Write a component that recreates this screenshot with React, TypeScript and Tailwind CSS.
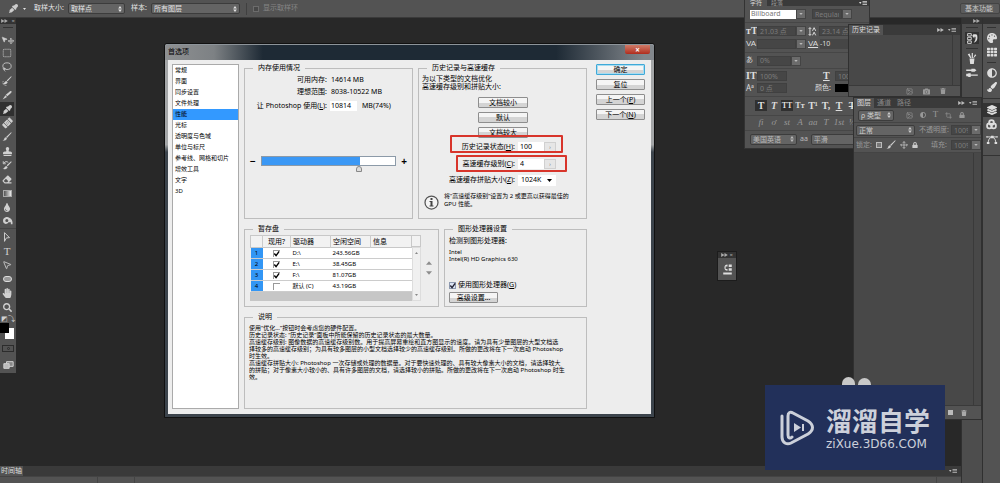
import type { ReactNode } from 'react';
import {
  FaAdjust,
  FaBandAid,
  FaCamera,
  FaEraser,
  FaEyeDropper,
  FaHandPaper,
  FaLayerGroup,
  FaLock,
  FaPaintBrush,
  FaPalette,
  FaSearch,
  FaStamp,
  FaTh,
  FaTint,
  FaTrash,
} from 'react-icons/fa';
import { Crop, Image, Lasso, Move, MousePointer2, SquareDashed } from 'lucide-react';

const categories = [
  '常规',
  '界面',
  '同步设置',
  '文件处理',
  '性能',
  '光标',
  '透明度与色域',
  '单位与标尺',
  '参考线、网格和切片',
  '增效工具',
  '文字',
  '3D',
];

const disks = [
  { id: 1, name: 'D:\\', free: '243.56GB', active: true },
  { id: 2, name: 'E:\\', free: '38.45GB', active: true },
  { id: 3, name: 'F:\\', free: '81.07GB', active: true },
  { id: 4, name: '默认 (C)', free: '43.19GB', active: false },
];

const description = [
  '使用“优化...”按钮时会考虑您的硬件配置。',
  '历史记录状态: “历史记录”面板中所能保留的历史记录状态的最大数量。',
  '高速缓存级别: 图像数据的高速缓存级别数。用于提高屏幕重绘和直方图显示的速度。请为具有少量图层的大型文档选',
  '择较多的高速缓存级别；为具有较多图层的小型文档选择较少的高速缓存级别。所做的更改将在下一次启动 Photoshop',
  '时生效。',
  '高速缓存拼贴大小: Photoshop 一次存储或处理的数据量。对于要快速处理的、具有较大像素大小的文档，请选择较大',
  '的拼贴；对于像素大小较小的、具有许多图层的文档，请选择较小的拼贴。所做的更改将在下一次启动 Photoshop 时生',
  '效。',
];

const Triangle = ({ className }: { className: string }) => (
  <svg viewBox="0 0 10 6" className={className} fill="currentColor" aria-hidden="true">
    <path d="M0 0h10L5 6z" />
  </svg>
);

const UpDown = () => (
  <svg viewBox="0 0 6 10" className="h-[6px] w-1 shrink-0" fill="currentColor" aria-hidden="true">
    <path d="M3 0l3 4H0zM3 10L0 6h6z" />
  </svg>
);

const DoubleArrow = () => (
  <svg viewBox="0 0 10 6" className="h-1 w-[7px]" fill="currentColor" aria-hidden="true">
    <path d="M0 0l5 3-5 3zM5 0l5 3-5 3z" />
  </svg>
);

const MenuIcon = () => (
  <svg viewBox="0 0 16 8" className="h-1 w-2" fill="currentColor" aria-hidden="true">
    <path d="M0 2h5L2.500 6zM7 0h9v1.500H7zM7 3h9v1.500H7zM7 6h9v1.500H7z" />
  </svg>
);

const CheckMark = () => (
  <svg
    viewBox="0 0 8 8"
    className="pointer-events-none invisible col-start-1 row-start-1 h-[7px] w-[7px] peer-checked:visible"
    fill="none"
    stroke="currentColor"
    strokeWidth="1.600"
    aria-hidden="true"
  >
    <path d="M1.500 4l2 2.500L7 1.500" />
  </svg>
);

const BrushIcon = () => (
  <svg viewBox="0 0 16 16" className="h-[10px] w-[10px]" fill="currentColor" aria-hidden="true">
    <path d="M15.500 1L8 9.500 6.500 8 14.500.500zM6 8.500l2 2C7 13 4 14.500.500 14c2-.8 2.500-1.500 3-3S4.800 8.800 6 8.500z" />
  </svg>
);

const SliceIcon = () => (
  <svg viewBox="0 0 16 16" className="h-[10px] w-[10px]" fill="currentColor" aria-hidden="true">
    <path d="M15 2c-1-1-2.500 0-3.500 1L6 7.500 8.500 10 14 5c1-1 2-2 1-3zM5.500 8.500L8 11l-7 4z" />
  </svg>
);

const MarqueeBrushIcon = () => (
  <svg viewBox="0 0 16 16" className="h-[10px] w-[10px]" fill="currentColor" aria-hidden="true">
    <path d="M15.500 1L9 8.500 7.500 7 14.500.500zM7 8l2 2c-1 3-4 4-8 3 2.500-.8 3.200-4.500 6-5z" />
    <path d="M2 8C0 12 3 15.500 8 15.500" fill="none" stroke="currentColor" strokeDasharray="2 1" />
  </svg>
);

const HistoryBrushIcon = () => (
  <svg viewBox="0 0 16 16" className="h-[10px] w-[10px]" fill="currentColor" aria-hidden="true">
    <path d="M15.500 3L9 10 7.500 8.500 14.500 2zM7 9.500l2 2c-1 3-4 3.500-8 3 2.500-.8 3.200-4.500 6-5z" />
    <path d="M3 5c2-3 5-3 7-1M2 2v4h4" fill="none" stroke="currentColor" strokeWidth="1.500" />
  </svg>
);

const DodgeIcon = () => (
  <svg viewBox="0 0 16 12" className="h-2 w-[11px]" fill="currentColor" aria-hidden="true">
    <path
      fillRule="evenodd"
      d="M6 0C10 0 15 2 15.500 8v3H13V8H9.500C8 10.500 5 11 3 9.500S-.5 2 6 0zm1 3a2.300 2.300 0 100 4.600A2.300 2.300 0 007 3z"
    />
  </svg>
);

const PenIcon = () => (
  <svg viewBox="0 0 12 16" className="h-[10px] w-2" fill="none" stroke="currentColor" aria-hidden="true">
    <path d="M2 15L2 1l8 8-5 .500L2 15" strokeWidth="1.500" />
  </svg>
);

const BrushCupIcon = () => (
  <svg viewBox="0 0 16 18" className="h-[11px] w-[10px]" fill="currentColor" aria-hidden="true">
    <path d="M4 9h8l-1 9H5zM1 2l3-1 3 7H5zM7.500 0h2v8h-2zM13 2l2 1.500L11 8h-1z" />
  </svg>
);

const BrushSetIcon = () => (
  <svg viewBox="0 0 18 14" className="h-[9px] w-3" fill="currentColor" aria-hidden="true">
    <path d="M0 2.500h8V1h5l3 2.500L13 6H8V4.500H0zM0 9h2l2-1h3v2h11v2H7v2H4l-2-1H0z" />
  </svg>
);

const HistoryIcon = () => (
  <svg viewBox="0 0 18 18" className="h-[11px] w-[11px]" aria-hidden="true">
    <path d="M1 1h6v4H1zM1 7h6v4H1zM1 13h6v4H1z" fill="none" stroke="currentColor" strokeWidth="1.500" />
    <path d="M10 2h4c3 0 3 2 3 6s-2 6-6 8c2-3 3-5 3-8V6h-2v3L8.500 4.500 12 1" fill="currentColor" />
  </svg>
);

const ChannelIcon = () => (
  <svg viewBox="0 0 16 16" className="h-[11px] w-[11px]" fill="none" stroke="currentColor" strokeWidth="2.500" aria-hidden="true">
    <circle cx="8" cy="5" r="3.500" />
    <circle cx="5" cy="10" r="3.500" />
    <circle cx="11" cy="10" r="3.500" />
  </svg>
);

const PathIcon = () => (
  <svg viewBox="0 0 18 14" className="h-[9px] w-3" fill="none" stroke="currentColor" aria-hidden="true">
    <path d="M1 3h16M3 13C3 8 5 4 9 3c4 1 6 5 6 10" strokeWidth="1.500" />
    <path d="M7.500 1h4v4h-4zM1 11h4v3H1zM13 11h4v3h-4zM0 2h2v2H0zM16 2h2v2h-2z" fill="currentColor" stroke="none" />
  </svg>
);

const tools: { name: string; icon: ReactNode }[] = [
  { name: '移动', icon: <><MousePointer2 className="h-[7px] w-[7px]" fill="currentColor" /><Move className="mt-1 h-[6px] w-[6px]" strokeWidth={3} /></> },
  { name: '选框', icon: <SquareDashed className="h-[10px] w-[10px]" /> },
  { name: '套索', icon: <Lasso className="h-[10px] w-[10px]" /> },
  { name: '快速选择', icon: <MarqueeBrushIcon /> },
  { name: '裁剪', icon: <SliceIcon /> },
  { name: '吸管', icon: <FaEyeDropper className="h-[9px] w-[9px]" /> },
  { name: '修复画笔', icon: <FaBandAid className="h-[10px] w-[11px] -rotate-45" /> },
  { name: '画笔', icon: <BrushIcon /> },
  { name: '图章', icon: <FaStamp className="h-[9px] w-[9px]" /> },
  { name: '历史画笔', icon: <HistoryBrushIcon /> },
  { name: '橡皮擦', icon: <FaEraser className="h-[9px] w-[10px]" /> },
  { name: '渐变', icon: <span className="h-[7px] w-[9px] border border-[#aaa] bg-linear-to-r from-[#555] to-[#eee]" /> },
  { name: '模糊', icon: <FaTint className="h-[9px] w-2" /> },
  { name: '减淡', icon: <DodgeIcon /> },
];

const vectorTools: { name: string; icon: ReactNode }[] = [
  { name: '钢笔', icon: <PenIcon /> },
  { name: '文字', icon: <span className="font-['Liberation_Serif',serif] text-[11px]">T</span> },
  { name: '路径选择', icon: <MousePointer2 className="h-[10px] w-[10px]" /> },
  { name: '形状', icon: <span className="h-[6px] w-[9px] rounded-[3px] border border-[#ddd] bg-[#999]" /> },
  { name: '抓手', icon: <FaHandPaper className="h-[10px] w-[10px]" /> },
  { name: '缩放', icon: <FaSearch className="h-[9px] w-[9px]" /> },
];

const ToolButton = ({ name, active, children }: { name: string; active?: boolean; children: ReactNode }) => (
  <button
    aria-label={name}
    className={`flex h-[14px] w-[14px] items-center justify-center ${active ? 'bg-[#303030]' : ''}`}
  >
    {children}
  </button>
);

const Toolbar = () => (
  <aside className="flex w-4 shrink-0 flex-col self-start bg-[#535353] text-[#d0d0d0]">
    <div className="flex h-[6px] items-center justify-between bg-[#333] px-px text-[#aaa]">
      <DoubleArrow />
      <span className="text-[6px] leading-[6px]">×</span>
    </div>
    <div className="mx-[3px] mt-[3px] mb-1 h-px bg-[#333]" />
    {tools.map((tool) => (
      <ToolButton key={tool.name} name={tool.name} active={tool.name === '吸管'}>
        {tool.icon}
      </ToolButton>
    ))}
    <div className="mb-px h-px bg-[#444]" />
    {vectorTools.map((tool) => (
      <ToolButton key={tool.name} name={tool.name}>
        {tool.icon}
      </ToolButton>
    ))}
    <div className="flex h-[9px] items-center justify-between px-px text-[7px] leading-none">
      <span>◩</span>
      <span>⤵</span>
    </div>
    <div className="grid h-[18px] grid-cols-[5px_4px_5px] grid-rows-[5px_5px_6px]">
      <span className="z-10 col-span-2 col-start-1 row-span-2 row-start-1 bg-black" />
      <span className="col-span-2 col-start-2 row-span-2 row-start-2 bg-white" />
    </div>
    <button aria-label="快速蒙版" className="mx-[2px] mt-1 flex h-[7px] items-center justify-center border border-[#2c2c2c]">
      <span className="h-[3px] w-[3px] rounded-full border border-[#2c2c2c]" />
    </button>
    <button aria-label="屏幕模式" className="mt-2 mb-1 flex h-[9px] items-center justify-center">
      <svg viewBox="0 0 16 12" className="h-2 w-[11px]" fill="none" stroke="currentColor" strokeWidth="1.500" aria-hidden="true">
        <path d="M5 1h10v7H5z" fill="#888" />
        <path d="M1 4h8v7H1z" fill="#bbb" />
      </svg>
    </button>
  </aside>
);

const DarkSelect = ({ label, value, className }: { label: string; value: string; className: string }) => (
  <div className={`flex h-[11px] items-center rounded-[2px] border border-[#3c3c3c] bg-[#646464] px-[2px] ${className}`}>
    <select aria-label={label} className="min-w-0 flex-1 appearance-none leading-[9px] outline-none">
      <option>{value}</option>
    </select>
    <UpDown />
  </div>
);

const OptionsBar = () => (
  <header className="flex h-[18px] shrink-0 items-center border-b border-[#3a3a3a] bg-[#535353] pl-[9px] text-[7px] text-[#e4e4e4]">
    <FaEyeDropper className="h-[9px] w-[9px] text-[#ccc]" />
    <Triangle className="ml-[5px] h-[2px] w-[3px]" />
    <span className="ml-2 w-[34px]">取样大小:</span>
    <DarkSelect label="取样大小" value="取样点" className="w-[57px]" />
    <span className="ml-[6px] w-5">样本:</span>
    <DarkSelect label="样本" value="所有图层" className="w-[89px]" />
    <div className="mx-[6px] h-3 w-px bg-[#404040]" />
    <label className="flex items-center gap-1 text-[#858585]">
      <input type="checkbox" disabled className="h-[6px] w-[6px] appearance-none border border-[#6c6c6c] bg-[#484848]" />
      显示取样环
    </label>
    <button className="ml-auto h-[11px] rounded-[2px] border border-[#444] bg-[#5c5c5c] pr-[6px] pl-[4px] leading-[9px] text-[#ccc]">基本功能</button>
  </header>
);

const PanelTabs = ({ tabs }: { tabs: string[] }) => (
  <div className="flex h-[10px] shrink-0 items-center bg-[#3a3a3a] pr-1 text-[#bbb]">
    {tabs.map((tab, index) => (
      <button
        key={tab}
        className={`h-full px-[3px] leading-[10px] ${index === 0 ? 'bg-[#535353] text-[#ddd]' : 'text-[#888]'}`}
      >
        {tab}
      </button>
    ))}
    <span className="mr-1 ml-auto flex"><DoubleArrow /></span>
    <MenuIcon />
  </div>
);

const DropButton = ({ label }: { label: string }) => (
  <button aria-label={label} className="flex h-[10px] w-[10px] shrink-0 items-center justify-center border border-[#444] bg-[#6b6b6b] text-[#bbb]">
    <Triangle className="h-[2px] w-1" />
  </button>
);

const DarkField = ({ label, value, className }: { label: string; value: string; className: string }) => (
  <input
    aria-label={label}
    defaultValue={value}
    className={`h-[10px] min-w-0 border border-[#404040] bg-[#464646] px-[2px] leading-2 text-[#7c7c7c] outline-none ${className}`}
  />
);

const CharacterPanel = () => (
  <section className="absolute top-0 right-[130px] flex w-[126px] flex-col overflow-hidden border border-t-0 border-[#333] bg-[#535353] text-[7px] text-[#ddd]">
    <div className="flex h-[6px] items-center bg-[#3a3a3a] pr-[2px] text-[6px] leading-[6px]">
      <button className="h-[6px] bg-[#535353] px-[5px]">字符</button>
      <button className="h-[6px] px-1 text-[#999]">段落</button>
      <span className="ml-auto"><MenuIcon /></span>
    </div>
    <div className="flex h-[17px] items-center border-b border-[#464646] pl-[5px]">
      <input aria-label="字体" defaultValue="Billboard" className="h-[9px] w-[46px] bg-white px-px text-[#777] outline-none" />
      <DropButton label="选择字体" />
      <DarkField label="字形" value="Regular" className="ml-[6px] w-[30px]" />
      <DropButton label="选择字形" />
    </div>
    <div className="flex flex-col gap-[3px] border-b border-[#464646] py-[3px] pl-px">
      <div className="flex items-center">
        <span className="w-[11px] font-['Liberation_Serif',serif] text-[10px] leading-[10px] font-bold">тT</span>
        <DarkField label="字号" value="21.03 点" className="w-[39px]" />
        <DropButton label="选择字号" />
        <svg viewBox="0 0 14 14" className="mx-[2px] h-[9px] w-[9px]" fill="none" stroke="currentColor" strokeWidth="1.500" aria-hidden="true">
          <path d="M3 1v12M1 3l2-2 2 2M1 11l2 2 2-2M7 6l2.500-5L12 6M7 13l2.500-5 2.500 5" />
        </svg>
        <DarkField label="行距" value="23.14 点" className="w-[40px]" />
      </div>
      <div className="flex items-center">
        <span className="w-[11px] font-['Liberation_Sans',sans-serif] text-[8px] leading-[10px]">VA</span>
        <DarkField label="字偶间距" value="" className="w-[39px]" />
        <DropButton label="选择字偶间距" />
        <span className="ml-[2px] w-3 font-['Liberation_Sans',sans-serif] text-[8px] leading-[10px] underline">VA</span>
        <input aria-label="字距" defaultValue="-10" className="h-[10px] w-[40px] bg-[#464646] text-[#ddd] outline-none" />
      </div>
    </div>
    <div className="flex h-[16px] items-center border-b border-[#464646] pl-px">
      <span className="w-[11px]">あ</span>
      <DarkField label="比例间距" value="0%" className="w-[34px]" />
      <DropButton label="选择比例间距" />
    </div>
    <div className="flex flex-col gap-[2px] border-b border-[#464646] py-[2px] pl-px">
      <div className="flex items-center">
        <span className="w-[11px] font-['Liberation_Serif',serif] text-[10px] leading-[10px] font-bold">IT</span>
        <DarkField label="垂直缩放" value="100%" className="w-[30px]" />
        <span className="ml-9 w-3 font-['Liberation_Serif',serif] text-[10px] leading-[10px] font-bold underline">T</span>
        <DarkField label="水平缩放" value="100%" className="w-[30px]" />
      </div>
      <div className="flex items-center">
        <span className="w-[11px] text-[8px] leading-[10px]">Aª</span>
        <DarkField label="基线偏移" value="0 点" className="w-[30px]" />
        <span className="ml-7 w-5">颜色:</span>
        <button aria-label="文字颜色" className="h-2 w-[30px] bg-black" />
      </div>
    </div>
    <div className="flex h-[18px] items-center gap-px pl-[10px] font-['Liberation_Serif',serif] text-[10px] font-bold">
      <button className="h-[11px] w-3 bg-[#303030] leading-[11px]">T</button>
      <button className="h-[11px] w-3 leading-[11px] italic">T</button>
      <button className="h-[11px] w-3 bg-[#303030] text-[8px] leading-[11px]">TT</button>
      <button className="h-[11px] w-3 text-[8px] leading-[11px]">Tт</button>
      <button className="h-[11px] w-3 leading-[11px]">T¹</button>
      <button className="h-[11px] w-3 leading-[11px]">T,</button>
      <button className="h-[11px] w-3 leading-[11px] underline">T</button>
      <button className="h-[11px] w-3 leading-[11px] line-through">T</button>
    </div>
    <div className="flex h-[16px] items-center gap-px border-y border-[#464646] pl-[10px] font-['Liberation_Serif',serif] text-[9px] text-[#999]">
      {['fi', 'ơ', 'st', 'A', 'aa', 'T', '1st', '½'].map((feature) => (
        <button key={feature} className="h-[11px] w-3 leading-[11px] italic">{feature}</button>
      ))}
    </div>
    <div className="flex h-[17px] items-center gap-[3px] pl-[5px] text-[#bbb]">
      <DarkSelect label="语言" value="美国英语" className="w-[47px]" />
      <span>aa</span>
      <DarkSelect label="消除锯齿" value="平滑" className="w-[50px]" />
    </div>
  </section>
);

const HistoryPanel = () => (
  <section className="absolute top-6 right-[39px] flex h-[73px] w-[113px] flex-col border border-[#303030] bg-[#484848] text-[7px]">
    <PanelTabs tabs={['历史记录']} />
    <div className="mr-[7px] flex-1 border-r border-[#3a3a3a]" />
    <div className="flex h-[11px] items-center justify-end gap-[10px] border-t border-[#3a3a3a] bg-[#535353] pr-[14px] text-[#999]">
      <Image className="h-[7px] w-[7px]" />
      <FaCamera className="h-[7px] w-[7px]" />
      <FaTrash className="h-[6px] w-[6px]" />
    </div>
  </section>
);

const LayersPanel = () => (
  <section className="absolute top-[97px] right-[18px] flex h-[323px] w-[129px] flex-col border border-[#303030] bg-[#484848] text-[7px] text-[#ccc]">
    <PanelTabs tabs={['图层', '通道', '路径']} />
    <div className="flex h-[14px] items-center bg-[#535353] pl-1">
      <DarkSelect label="筛选类型" value="ρ 类型" className="w-9" />
      <div className="ml-3 flex flex-1 items-center justify-between pr-4 text-[#999]">
        <Image className="h-[7px] w-[7px]" />
        <FaAdjust className="h-[6px] w-[6px]" />
        <span className="font-['Liberation_Serif',serif] text-[9px]">T</span>
        <Crop className="h-[7px] w-[7px]" />
        <FaLock className="h-[6px] w-[6px]" />
      </div>
    </div>
    <div className="flex h-[15px] items-center border-t border-[#444] bg-[#535353] pl-[2px]">
      <DarkSelect label="混合模式" value="正常" className="w-[59px]" />
      <span className="ml-1 w-8 shrink-0 whitespace-nowrap text-[#999]">不透明度:</span>
      <DarkField label="不透明度" value="100%" className="w-5" />
      <DropButton label="调整不透明度" />
    </div>
    <div className="flex h-[16px] items-center border-y border-[#444] bg-[#535353] pl-[2px]">
      <span className="w-5 shrink-0 whitespace-nowrap text-[#999]">锁定:</span>
      <div className="flex w-[42px] shrink-0 items-center justify-between">
        <span className="h-[6px] w-[6px] border border-[#bbb] bg-[#777]" />
        <BrushIcon />
        <Move className="h-2 w-2" />
        <FaLock className="h-[6px] w-[6px]" />
      </div>
      <span className="ml-[13px] w-5 shrink-0 whitespace-nowrap text-[#999]">填充:</span>
      <DarkField label="填充" value="100%" className="w-5" />
      <DropButton label="调整填充" />
    </div>
    <div className="mr-[7px] flex-1 border-r border-[#3a3a3a]" />
    <div className="flex h-[14px] items-center justify-end gap-2 border-t border-[#3a3a3a] bg-[#535353] pr-[14px] text-[#aaa]">
      <span className="h-[5px] w-[5px] bg-[#bbb]" />
      <FaTrash className="h-[6px] w-[6px]" />
    </div>
  </section>
);

const Dock = () => (
  <>
    <aside className="flex w-[21px] shrink-0 flex-col border-l border-[#303030] bg-[#4d4d4d] text-[#ddd]">
      <div className="flex h-[6px] items-center justify-end bg-[#333] pr-[2px] text-[#aaa]"><DoubleArrow /></div>
      <div className="mx-1 mt-[3px] mb-1 h-px bg-[#333]" />
      <button aria-label="历史记录" className="mx-[3px] flex h-3 items-center justify-center bg-[#333]"><HistoryIcon /></button>
      <div className="mx-1 mt-1 mb-[2px] h-px bg-[#333]" />
      <button aria-label="画笔预设" className="flex h-[14px] items-center justify-center"><BrushCupIcon /></button>
      <button aria-label="画笔" className="flex h-[14px] items-center justify-center"><BrushSetIcon /></button>
    </aside>
    <aside className="flex w-[18px] shrink-0 flex-col border-l border-[#303030] bg-[#535353] text-[#ddd]">
      <div className="h-[6px] bg-[#333]" />
      <div className="mx-1 my-[3px] h-px bg-[#333]" />
      <button aria-label="颜色" className="flex h-[14px] items-center justify-center"><FaPalette className="h-[10px] w-[10px]" /></button>
      <button aria-label="色板" className="flex h-[14px] items-center justify-center"><FaTh className="h-[10px] w-[10px]" /></button>
      <div className="mx-1 my-[3px] h-px bg-[#333]" />
      <button aria-label="调整" className="flex h-[14px] items-center justify-center"><FaAdjust className="h-[10px] w-[10px]" /></button>
      <button aria-label="样式" className="flex h-[14px] items-center justify-center"><FaPaintBrush className="h-[10px] w-[10px]" /></button>
      <div className="my-[4px] h-px bg-[#333]" />
      <button aria-label="图层" className="flex h-[14px] items-center justify-center bg-[#333]"><FaLayerGroup className="h-[10px] w-[10px]" /></button>
      <button aria-label="通道" className="flex h-[15px] items-center justify-center"><ChannelIcon /></button>
      <button aria-label="路径" className="flex h-[15px] items-center justify-center"><PathIcon /></button>
      <div className="mt-2 h-px bg-[#333]" />
    </aside>
  </>
);

const DialogButton = ({ className, children }: { className?: string; children: ReactNode }) => (
  <button
    className={`h-[11px] rounded-[1px] border bg-linear-to-b from-[#f5f5f5] from-50% to-[#d4d4d4] to-50% text-center leading-[9px] ${className ?? 'border-[#8e8e8e]'}`}
  >
    {children}
  </button>
);

const Group = ({ title, className, children }: { title: string; className: string; children: ReactNode }) => (
  <fieldset className={`min-w-0 border border-[#bdbdbd] ${className}`}>
    <legend className="ml-2 px-[5px] text-[7px] leading-3">{title}</legend>
    {children}
  </fieldset>
);

const MemoryGroup = () => (
  <Group title="内存使用情况" className="h-[157px] w-[169px]">
    <div className="grid grid-cols-[82px_1fr] items-center gap-x-1 text-[7px] leading-3">
      <span className="text-right">可用内存:</span>
      <span>14614 MB</span>
      <span className="text-right">理想范围:</span>
      <span>8038-10522 MB</span>
    </div>
    <div className="mt-[3px] grid grid-cols-[82px_1fr] items-center gap-x-[3px] text-[7px]">
      <label htmlFor="memory" className="text-right whitespace-nowrap">让 Photoshop 使用(<u>L</u>):</label>
      <span className="flex items-center gap-[5px]">
        <input id="memory" defaultValue="10814" className="h-[10px] w-[27px] bg-white px-px outline-none" />
        MB(74%)
      </span>
    </div>
    <div className="mt-[43px] flex items-center gap-[5px] px-[5px] text-[10px] leading-3 font-bold">
      <span>−</span>
      <input
        type="range"
        aria-label="内存使用量"
        defaultValue={74}
        className="h-[10px] min-w-0 flex-1 appearance-none border border-[#8c9aa8] bg-linear-to-r from-[#3b98f5] from-74% to-white to-74% [&::-webkit-slider-thumb]:h-[6px] [&::-webkit-slider-thumb]:w-[6px] [&::-webkit-slider-thumb]:translate-y-2 [&::-webkit-slider-thumb]:appearance-none [&::-webkit-slider-thumb]:rounded-t-full [&::-webkit-slider-thumb]:border [&::-webkit-slider-thumb]:border-[#888] [&::-webkit-slider-thumb]:bg-[#ddd]"
      />
      <span>+</span>
    </div>
  </Group>
);

const CacheGroup = () => (
  <Group title="历史记录与高速缓存" className="h-[157px] flex-1">
    <p className="ml-[3px] pt-px text-[7px] leading-2">
      为以下类型的文档优化
      <br />
      高速缓存级别和拼贴大小:
    </p>
    <div className="ml-[59px] mt-[6px] flex w-[50px] flex-col gap-1 text-[7px]">
      <DialogButton>文档较小</DialogButton>
      <DialogButton>默认</DialogButton>
      <DialogButton>文档较大</DialogButton>
    </div>
    <div className="mt-1 grid grid-cols-[96px_38px] items-center gap-x-[3px] gap-y-[6px] text-[7px]">
      <label htmlFor="states" className="text-right">历史记录状态(<u>H</u>):</label>
      <div className="flex h-[10px] bg-white">
        <input id="states" defaultValue="100" className="min-w-0 flex-1 pl-[2px] outline-none" />
        <button aria-label="选择历史记录状态" className="w-3 border border-[#d0d0d0] bg-[#e6e6e6] text-[5px] leading-2 text-[#666]">›</button>
      </div>
      <label htmlFor="levels" className="text-right">高速缓存级别(<u>C</u>):</label>
      <div className="flex h-[10px] bg-white">
        <input id="levels" defaultValue="4" className="min-w-0 flex-1 pl-[2px] outline-none" />
        <button aria-label="选择高速缓存级别" className="w-3 border border-[#d0d0d0] bg-[#e6e6e6] text-[5px] leading-2 text-[#666]">›</button>
      </div>
      <label htmlFor="tile" className="text-right whitespace-nowrap">高速缓存拼贴大小(<u>Z</u>):</label>
      <div className="flex h-[11px] items-center bg-white pr-1">
        <select id="tile" className="min-w-0 flex-1 appearance-none pl-[3px] outline-none">
          <option>1024K</option>
        </select>
        <Triangle className="h-[3px] w-[5px]" />
      </div>
    </div>
    <div className="mt-1 ml-[5px] flex items-center gap-[5px]">
      <svg viewBox="0 0 30 30" className="mt-[5px] h-[15px] w-[15px] shrink-0" aria-hidden="true">
        <circle cx="15" cy="15" r="13" fill="#f4f4f4" stroke="#555" strokeWidth="2.500" />
        <path d="M13 6h4v4h-4zM11 12h6v9h2v2h-8v-2h2v-7h-2z" fill="#444" />
      </svg>
      <p className="text-[6px] leading-2 whitespace-nowrap">
        将“高速缓存级别”设置为 2 或更高以获得最佳的
        <br />
        GPU 性能。
      </p>
    </div>
  </Group>
);

const ScratchGroup = () => (
  <Group title="暂存盘" className="h-[84px] w-[195px]">
    <div className="ml-[5px] flex">
      <div className="w-[171px]">
        <div className="flex">
          <table className="w-[162px] table-fixed border-collapse text-left text-[6px]">
            <thead className="bg-[#f2f2f2]">
              <tr className="h-3 border border-[#c8c8c8] text-[7px] leading-[10px]">
                <th className="w-3 border-r border-[#ccc]" aria-label="编号" />
                <th className="w-7 border-r border-[#ccc] text-center font-normal whitespace-nowrap">现用?</th>
                <th className="w-10 border-r border-[#ccc] pl-[2px] font-normal">驱动器</th>
                <th className="w-10 border-r border-[#ccc] pl-[2px] font-normal">空闲空间</th>
                <th className="pl-[2px] font-normal">信息</th>
              </tr>
            </thead>
            <tbody className="bg-white">
              {disks.map((disk) => (
                <tr key={disk.id} className="h-[11px] border-b border-[#ccc] leading-[10px]">
                  <td className="bg-[#3296f5] text-center">{disk.id}</td>
                  <td>
                    <span className="grid place-content-center">
                      <input
                        type="checkbox"
                        aria-label={`现用 ${disk.name}`}
                        defaultChecked={disk.active}
                        className="peer col-start-1 row-start-1 h-[7px] w-[7px] appearance-none border-t border-l border-[#999]"
                      />
                      <CheckMark />
                    </span>
                  </td>
                  <td className="pl-[2px] whitespace-nowrap">{disk.name}</td>
                  <td className="pl-[2px]">{disk.free}</td>
                  <td />
                </tr>
              ))}
            </tbody>
          </table>
          <div className="-mb-[9px] flex w-[9px] flex-col">
            <div className="h-3 border border-l-0 border-[#c8c8c8] bg-[#f2f2f2]" />
            <div className="flex flex-1 flex-col items-center justify-between border border-[#ddd] bg-[#f0f0f0] py-1 text-[#888]">
              <Triangle className="h-[2px] w-[3px] rotate-180" />
              <Triangle className="h-[2px] w-[3px]" />
            </div>
          </div>
        </div>
        <div className="mr-[9px] h-[9px] bg-[#c6c6c6]" />
      </div>
      <div className="ml-[5px] flex flex-col items-center justify-center gap-[6px] text-[#8c8c8c]">
        <button aria-label="上移"><Triangle className="h-1 w-[6px] rotate-180" /></button>
        <button aria-label="下移"><Triangle className="h-1 w-[6px]" /></button>
      </div>
    </div>
  </Group>
);

const GpuGroup = () => (
  <Group title="图形处理器设置" className="h-[84px] flex-1">
    <div className="flex flex-col items-start pl-1 text-[7px]">
      <p className="leading-3">检测到图形处理器:</p>
      <p className="mt-[2px] text-[6px] leading-[7px]">
        Intel
        <br />
        Intel(R) HD Graphics 630
      </p>
      <label className="mt-[16px] flex items-center gap-[2px] leading-3">
        <span className="grid text-[#223]">
          <input
            type="checkbox"
            defaultChecked
            className="peer col-start-1 row-start-1 h-[7px] w-[7px] appearance-none border border-[#8e9ab0] bg-[#dce4f4]"
          />
          <CheckMark />
        </span>
        <span>使用图形处理器(<u>G</u>)</span>
      </label>
      <DialogButton className="mt-px w-[49px] border-[#8e8e8e]">高级设置...</DialogButton>
    </div>
  </Group>
);

const PreferencesDialog = () => (
  <section
    role="dialog"
    aria-label="首选项"
    className="absolute top-[43px] left-[164px] w-[491px] rounded-t-[3px] border border-[#111] bg-linear-to-b from-[#a4a6a8] from-27% to-[#3c444c] to-29% px-[3px] pb-[3px] text-black"
  >
    <div className="-mx-[3px] flex h-4 items-start rounded-t-[3px] border-t border-[#8d949a] bg-[linear-gradient(to_right,#8e9092_0%,#7d8184_10%,#1e2a35_20%,#1e2a35_80%,#82878c_98%)] pl-[3px]">
      <h1 className="text-[7px] leading-[14px]">首选项</h1>
      <div className="flex-1" />
      <button aria-label="关闭" className="mr-1 flex h-[9px] w-[25px] items-center justify-center rounded-b-[2px] bg-linear-to-b from-[#d07a68] to-[#b02a1c] text-[8px] leading-none font-bold text-white">
        ×
      </button>
    </div>
    <div className="relative flex bg-[#ededed] pt-[2px] pr-[6px] pb-[5px] pl-1">
      <ul className="mt-[2px] w-[67px] border border-[#aaa] bg-white text-[6px] leading-[11px]">
        {categories.map((category) => (
          <li key={category} className={`pl-[2px] ${category === '性能' ? 'bg-[#3399ff]' : ''}`}>
            {category}
          </li>
        ))}
      </ul>
      <div className="ml-[5px] flex min-w-0 flex-1 flex-col gap-1">
        <div className="flex gap-[5px]">
          <MemoryGroup />
          <CacheGroup />
        </div>
        <div className="flex gap-[5px]">
          <ScratchGroup />
          <GpuGroup />
        </div>
        <Group title="说明" className="h-[98px]">
          <div className="pt-[2px] pl-1 text-[6px] leading-[7px] whitespace-nowrap">
            {description.map((line) => (
              <p key={line}>{line}</p>
            ))}
          </div>
        </Group>
      </div>
      <div className="mt-[2px] ml-[9px] flex w-[49px] flex-col gap-1 text-[7px]">
        <DialogButton className="border-[#3fa9d8] ring-1 ring-[#a8dcf0] ring-inset">确定</DialogButton>
        <DialogButton>复位</DialogButton>
        <DialogButton>上一个(<u>P</u>)</DialogButton>
        <DialogButton>下一个(<u>N</u>)</DialogButton>
      </div>
      <div className="pointer-events-none absolute top-[75px] left-[282px] h-[18px] w-[113px] rounded-[1px] border-2 border-[#d8352b]" />
      <div className="pointer-events-none absolute top-[95px] left-[288px] h-[17px] w-[111px] rounded-[1px] border-2 border-[#d8352b]" />
    </div>
  </section>
);

const Watermark = () => (
  <div className="absolute right-[55px] bottom-[13px] w-[180px]">
    <div className="ml-[77px] flex h-2 gap-[3px]">
      <span className="w-[13px] rounded-t-full bg-[#c8c8c8]" />
      <span className="mt-px w-[13px] rounded-t-full bg-[#c8c8c8]" />
    </div>
    <div className="flex h-[85px] items-center bg-[#22305a] pl-[15px] text-[#ccd0da]">
      <svg viewBox="0 0 34 36" className="h-9 w-[34px] shrink-0" fill="none" stroke="currentColor" strokeWidth="3" strokeLinecap="round" aria-hidden="true">
        <path d="M2 6v21c0 6 5 8 9 6l17-9c6-4 6-9 0-13L13 3c-3-2-5 0-5 3v19c0 3 2 4 4 2" />
        <path d="M14 13l7 4.500-7 4.500z" fill="currentColor" stroke="none" />
        <path d="M23 14v7" strokeWidth="2" strokeLinecap="butt" />
      </svg>
      <div className="ml-[12px]">
        <p className="text-[26px] leading-[30px] font-bold whitespace-nowrap">溜溜自学</p>
        <p className="mt-[2px] font-['DejaVu_Sans',sans-serif] text-[12px] leading-[12px]">ziXue.3D66.COM</p>
      </div>
    </div>
  </div>
);

export default function App() {
  return (
    <div className="relative flex min-h-screen flex-col overflow-hidden bg-[#282828] font-['Noto_Sans','Noto_Sans_CJK_SC',sans-serif]">
      <OptionsBar />
      <main className="flex flex-1">
        <div className="flex min-w-0 flex-1 flex-col">
          <div className="flex flex-1">
            <Toolbar />
          </div>
          <footer className="text-[7px]">
            <div className="flex h-[10px] items-center justify-between bg-[#3a3a3a] pr-1 text-[#bbb]">
              <button className="h-[10px] bg-[#535353] px-px leading-[10px] text-[#ddd]">时间轴</button>
              <MenuIcon />
            </div>
            <div className="flex h-[7px] border-t border-[#444] bg-[#535353]">
              <div className="ml-[97px] w-[38px] border-x border-[#444]" />
              <div className="mr-6 ml-auto border-l border-[#444]" />
            </div>
          </footer>
        </div>
        <Dock />
      </main>
      <CharacterPanel />
      <LayersPanel />
      <HistoryPanel />
      <section className="absolute top-[251px] left-[717px] w-5 border border-[#1c1c1c] bg-[#535353] text-[#ddd]">
        <div className="flex h-[6px] items-center justify-between bg-[#333] px-[3px] text-[#aaa]">
          <DoubleArrow />
          <span className="text-[6px] leading-[6px]">×</span>
        </div>
        <button aria-label="工具预设" className="flex h-[22px] w-full items-center justify-center">
          <svg viewBox="0 0 18 18" className="h-[11px] w-[11px]" fill="currentColor" aria-hidden="true">
            <path d="M9 1a5 5 0 100 10V8H6V4h3zM11 1h5v4h-5zM11 7h5v4h-5zM2 14h14v3H2z" />
          </svg>
        </button>
      </section>
      <PreferencesDialog />
      <Watermark />
    </div>
  );
}
